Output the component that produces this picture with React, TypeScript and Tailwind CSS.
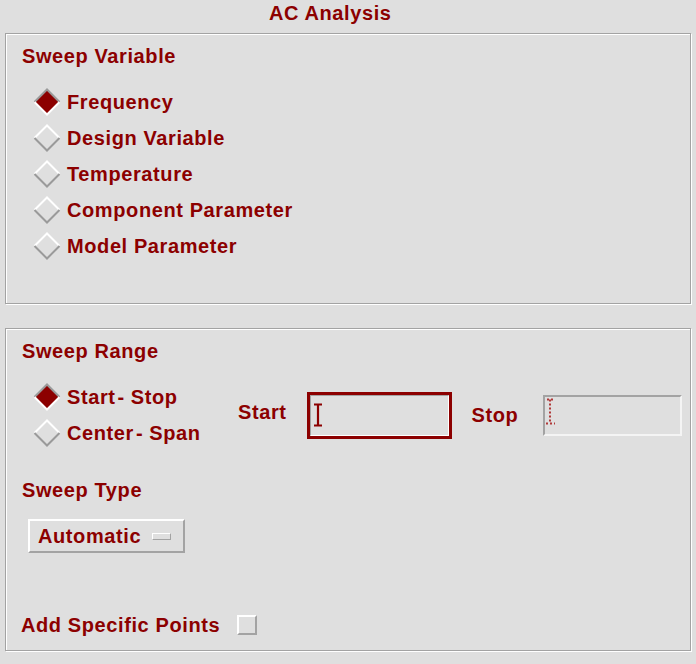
import React from "react";

const font = { fontFamily: '"Liberation Sans", Arial, sans-serif' };

function Diamond({ on }: { on: boolean }) {
  return (
    <svg width="28" height="28" viewBox="0 0 28 28" className="shrink-0">
      {on ? (
        <>
          <polygon points="14,1 27,14 14,27 1,14" fill="#8c0000" />
          <polyline points="1.5,14 14,1.5 26.5,14" fill="none" stroke="#9a9a9a" strokeWidth="2" />
          <polyline points="1.5,14 14,26.5 26.5,14" fill="none" stroke="#ffffff" strokeWidth="2" />
        </>
      ) : (
        <>
          <polyline points="1.5,14 14,1.5 26.5,14" fill="none" stroke="#ffffff" strokeWidth="2" />
          <polyline points="1.5,14 14,26.5 26.5,14" fill="none" stroke="#9a9a9a" strokeWidth="2" />
        </>
      )}
    </svg>
  );
}

function Radio({ label, on }: { label: React.ReactNode; on?: boolean }) {
  return (
    <div className="flex h-[36px] items-center">
      <Diamond on={!!on} />
      <span className="ml-[6px]">{label}</span>
    </div>
  );
}

const panel =
  "ml-[5px] w-[686px] border border-[#a3a3a3] shadow-[inset_1px_1px_0_#ffffff,1px_1px_0_#ffffff]";

export default function App() {
  return (
    <div
      className="h-[664px] w-[696px] bg-[#dfdfdf] text-[20px] font-bold leading-[24px] tracking-[0.6px] text-[#8c0000]"
      style={font}
    >
      <div className="h-[33px] pl-[269px] pt-px">AC Analysis</div>

      <div className={panel + " h-[271px] pl-[16px] pt-[10px]"}>
        <div>Sweep Variable</div>
        <div className="mt-[16px] flex flex-col pl-[11px]">
          <Radio label="Frequency" on />
          <Radio label="Design Variable" />
          <Radio label="Temperature" />
          <Radio label="Component Parameter" />
          <Radio label="Model Parameter" />
        </div>
      </div>

      <div className={panel + " mt-[24px] h-[323px] pl-[16px] pt-[10px]"}>
        <div>Sweep Range</div>
        <div className="mt-[16px] flex items-center">
          <div className="flex w-[216px] flex-col pl-[11px]">
            <Radio
              label={
                <>
                  Start<span className="ml-[2px] mr-[6px]">-</span>Stop
                </>
              }
              on
            />
            <Radio
              label={
                <>
                  Center<span className="ml-[2px] mr-[6px]">-</span>Span
                </>
              }
            />
          </div>
          <span className="mb-[6px]">Start</span>
          <div className="ml-[20px] h-[47px] w-[145px] border-[3px] border-[#8c0000]">
            <div className="flex h-full w-full items-center border border-b-white border-l-[#a3a3a3] border-r-white border-t-[#a3a3a3] pl-[2px]">
              <svg width="10" height="24" viewBox="0 0 10 24">
                <path d="M1 1.5 H9 M5 1.5 V22.5 M1 22.5 H9" stroke="#8c0000" strokeWidth="2.2" fill="none" />
              </svg>
            </div>
          </div>
          <span className="ml-[20px]">Stop</span>
          <div className="ml-[25px] flex h-[41px] w-[139px] items-start border-2 border-b-[#f4f4f4] border-l-[#a3a3a3] border-r-[#f4f4f4] border-t-[#a3a3a3] pt-px">
            <svg width="12" height="28" viewBox="0 0 12 28">
              <path
                d="M2 1.5 H8 M5 1.5 V25.5 M1 25.5 H10"
                stroke="#b03838"
                strokeWidth="2"
                strokeDasharray="2 2"
                fill="none"
              />
            </svg>
          </div>
        </div>

        <div className="mt-[27px]">Sweep Type</div>
        <div className="ml-[6px] mt-[17px] flex h-[34px] w-[157px] items-center border-2 border-b-[#a3a3a3] border-l-white border-r-[#a3a3a3] border-t-white pl-[8px]">
          <span>Automatic</span>
          <span className="ml-[11px] h-[7px] w-[19px] border border-b-[#a3a3a3] border-l-white border-r-[#a3a3a3] border-t-white" />
        </div>

        <div className="-ml-px mt-[60px] flex items-center">
          <span>Add Specific Points</span>
          <span className="ml-[17px] h-[20px] w-[20px] border-2 border-b-[#a3a3a3] border-l-white border-r-[#a3a3a3] border-t-white" />
        </div>
      </div>
    </div>
  );
}
